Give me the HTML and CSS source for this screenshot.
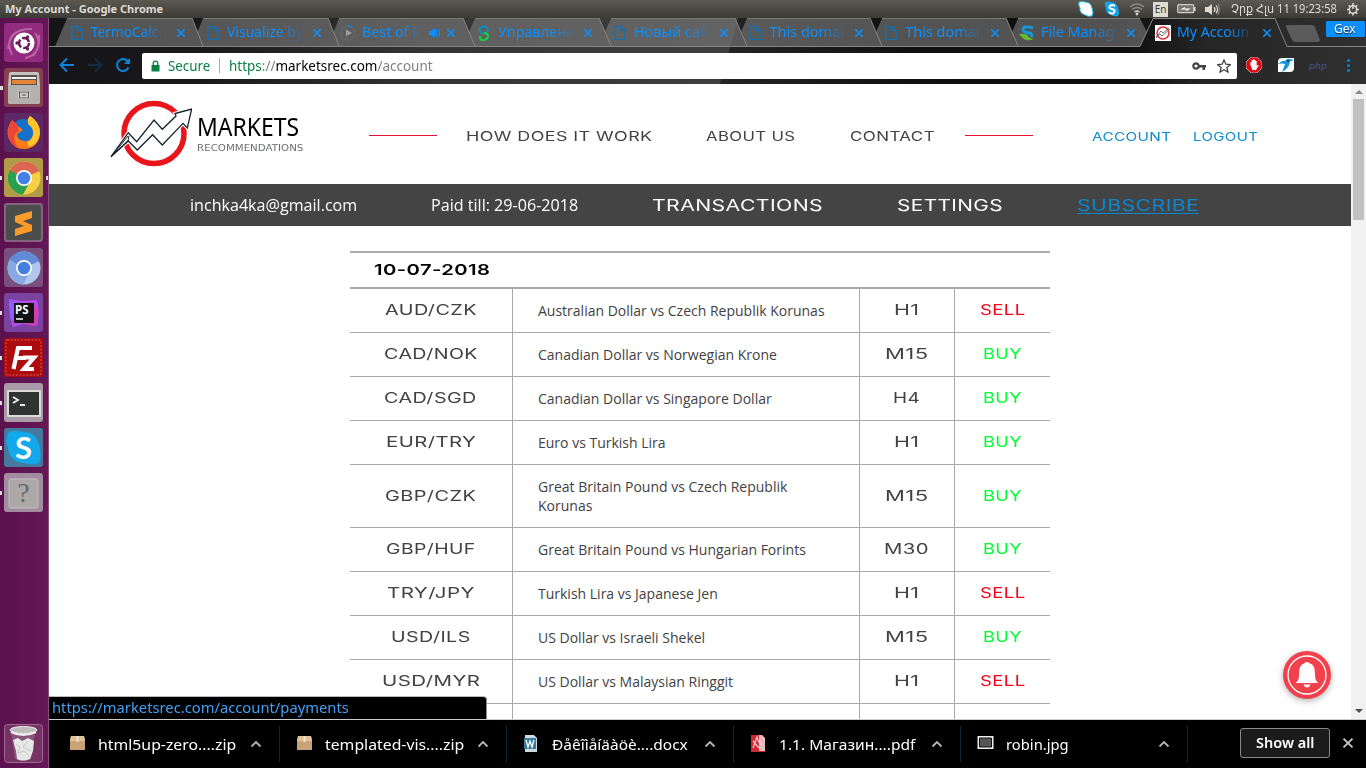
FILE: index.html
```html
<!DOCTYPE html>
<html lang="en">
<head>
<meta charset="utf-8">
<title>My Account</title>
<link rel="stylesheet" href="styles.css">
</head>
<body>
<svg class="defs" width="0" height="0">
  <symbol id="page" viewBox="0 0 12 16"><path d="M1 1.5h6l4 4v9H1z M7 1.5v4h4" fill="none" stroke="#0673c0" stroke-width="1.2"/></symbol>
  <symbol id="x" viewBox="0 0 10 10"><path d="M1.3 1.3l7.4 7.4M8.7 1.3l-7.4 7.4" fill="none" stroke="currentColor" stroke-width="1.6"/></symbol>
  <symbol id="up" viewBox="0 0 12 8"><path d="M1.5 6.5L6 2l4.500 4.500" fill="none" stroke="#b5b5b5" stroke-width="1.8"/></symbol>
  <symbol id="box" viewBox="0 0 17 17"><path d="M2 1h13l1 4v10H1V5z" fill="#c8a377"/><path d="M2 1h13l1 5H1z" fill="#dfc29c"/><path d="M7.500 1h2v6h-2z" fill="#f3e4cc"/></symbol>
</svg>

<header class="panel">
  <span class="panel-title fit" data-w="158">My Account - Google Chrome</span>
  <div class="tray">
    <svg width="16" height="16" viewBox="0 0 16 16"><path d="M1 1q4-1 6 0q6 0 7 6q2 5 0 8q-4 1-7-1Q1 12 2 7Q0 4 1 1z" fill="#fff" stroke="#22b3ee"/></svg>
    <svg width="16" height="16" viewBox="0 0 16 16"><path d="M1 1q4-1 6 0q6 0 7 6q2 5 0 8q-4 1-7-1Q1 12 2 7Q0 4 1 1z" fill="#12a5e8"/><path d="M11 5q-3-2-5 0t2 3t2 3.500t-5-.5" fill="none" stroke="#fff" stroke-width="2"/></svg>
    <svg width="16" height="16" viewBox="0 0 16 16" fill="none" stroke-width="1.300"><path d="M1 6q7-6 14 0M3 8.500q5-4 10 0" stroke="#8e8b82"/><path d="M5.500 11q2.500-2 5 0" stroke="#d8d5cb"/><circle cx="8" cy="13" r=".8" stroke="#d8d5cb"/></svg>
    <span class="lang">En</span>
    <svg width="19" height="16" viewBox="0 0 19 16"><rect x=".7" y="3.700" width="16" height="8" rx="1" fill="#77746b" stroke="#cfcbc2" stroke-width="1.200"/><path d="M17 6h1.500v4H17z" fill="#dfdbd2"/><path d="M3 8.500l5-2.500v1.500h6L9 10V8.500z" fill="#fff"/></svg>
    <svg width="16" height="16" viewBox="0 0 16 16"><path d="M1 6h3l4-3v11l-4-3H1z" fill="#dfdbd2"/><path d="M10 6q2 2.500 0 5M12 4.500q3 4 0 8" fill="none" stroke="#dfdbd2" stroke-width="1.200"/><path d="M14 3q3 5 0 11" fill="none" stroke="#918e85"/></svg>
    <span class="clock fit" data-w="106">Չրք Հլս 11 19:23:58</span>
    <svg width="14" height="16" viewBox="0 0 14 16"><circle cx="7" cy="8.500" r="3.700" fill="none" stroke="#dfdbd2" stroke-width="1.500"/><path d="M7 2v6M1 8.500h2M11 8.500h2M2.700 4.200l1.500 1.500M11.300 4.200L9.800 5.700M2.700 12.800l1.500-1.500M11.300 12.800l-1.500-1.500M7 12.500v2" stroke="#dfdbd2" stroke-width="1.500"/></svg>
  </div>
</header>

<div class="desktop">
<nav class="launcher">
  <svg class="app" viewBox="0 0 39 39"><rect width="39" height="39" rx="3" fill="#922b7e"/><path d="M4 26Q6 5 28 6M35 12q2 20-14 23M8 32Q0 14 15 8M29 33q10-12 2-23" fill="none" stroke="#c88abd" stroke-width="2" opacity=".6"/><circle cx="20" cy="20" r="10.500" fill="#fff"/><circle cx="20" cy="20" r="5" fill="none" stroke="#6b1c5a" stroke-width="2.500" stroke-dasharray="8.500 2"/><circle cx="13" cy="20" r="1.700" fill="#6b1c5a"/><circle cx="23.500" cy="14" r="1.700" fill="#6b1c5a"/><circle cx="23.500" cy="26" r="1.700" fill="#6b1c5a"/></svg>
  <svg class="app run1" viewBox="0 0 39 39"><rect width="39" height="39" rx="3" fill="#87404f"/><path d="M7 4h26q2 0 2 2l1 12v16q0 2-2 2H6q-2 0-2-2V18L5 6q0-2 2-2z" fill="#c5c4c1"/><path d="M7 7h26v10H7z" fill="#5a5248"/><path d="M8 9h24v2H8z" fill="#eee"/><path d="M8 12h24v4H8z" fill="#e58437"/><path d="M4 17h32v17q0 2-2 2H6q-2 0-2-2z" fill="#b3b2b0"/><rect x="15.500" y="24" width="9" height="6" rx="1" fill="none" stroke="#fff" stroke-width="2"/><rect x="15.500" y="24" width="9" height="6" fill="#ccc" stroke="#555"/><path d="M18 27h4" stroke="#555"/></svg>
  <svg class="app" viewBox="0 0 39 39"><rect width="39" height="39" rx="3" fill="#5b2863"/><circle cx="20" cy="20" r="14" fill="#1470c8"/><path d="M8 7Q1 17 5 26q5 11 17 10 13-2 14-16Q36 9 26 3q-4 4-1 9 5 3 4 10-2 7-9 6-7-1-7-7l6-4-4-3-4-3z" fill="#ff7b17"/><path d="M26 3q-4 4-1 9 5 3 4 10-2 6-6 7l2 5q10-3 11-14Q36 9 26 3z" fill="#ffc52c"/><path d="M8 7Q2 16 5 26q4 7 9 9-8-12 1-17l-2-7z" fill="#ee4438"/></svg>
  <svg class="app run active" viewBox="0 0 39 39"><rect width="39" height="39" rx="3" fill="#b29b47"/><circle cx="20" cy="20" r="16.500" fill="#f6cf45"/><path d="M20 20L5 13Q11 3 20 3.500 31 4 35.500 13z" fill="#d96552"/><path d="M5.500 12Q1 22 7 30q5 6 12 6.500L26 24z" fill="#2da04f"/><circle cx="20" cy="20" r="8" fill="#fff"/><circle cx="20" cy="20" r="6.300" fill="#4381e9"/></svg>
  <svg class="app" viewBox="0 0 39 39"><rect width="39" height="39" rx="3" fill="#87627f"/><rect x="2" y="2" width="35" height="35" rx="2" fill="#4b4c4c"/><path d="M11 13l17-5v7l-9 3 9 4v6L11 33v-7l9-3-9-4z" fill="#f99b29"/></svg>
  <svg class="app" viewBox="0 0 39 39"><rect width="39" height="39" rx="3" fill="#78507c"/><circle cx="20" cy="20" r="16.500" fill="#b1c7ed"/><path d="M20 20L5 12Q11 3 20 3.500 31 4 35.500 13z" fill="#618bd6"/><path d="M5.500 12Q1 22 7 30q5 6 12 6.500L26 24z" fill="#86a9e2"/><circle cx="20" cy="20" r="8" fill="#fff"/><circle cx="20" cy="20" r="6.300" fill="#477fe0"/></svg>
  <svg class="app run" viewBox="0 0 39 39"><rect width="39" height="39" rx="3" fill="#7b43a0"/><path d="M5 6l13 2 15-1 2 13-2 13-14-2-10 3-3-10z" fill="#b44bea"/><path d="M5 6l12 4-7 20-4-6z" fill="#945bff"/><path d="M26 8l9 10-3 15-8-1z" fill="#d33cb4"/><rect x="10" y="10" width="20" height="20" fill="#111"/><text x="11" y="21" class="ps">PS</text><path d="M12 26h7" stroke="#fff" stroke-width="1.500"/></svg>
  <svg class="app run" viewBox="0 0 39 39"><rect width="39" height="39" rx="3" fill="#ad0c0e"/><rect x="2" y="2" width="35" height="35" rx="1" fill="none" stroke="#d65a54" stroke-dasharray="2 1.500"/><path d="M9.500 31l4.500-21h14M12 20h10M19 19.500h11L20 31h10" fill="none" stroke="#fff" stroke-width="4.200"/></svg>
  <svg class="app run" viewBox="0 0 39 39"><rect width="39" height="39" rx="3" fill="#a99aa7"/><rect x="3" y="7" width="34" height="27" rx="1" fill="#dddcd9"/><rect x="5" y="9" width="30" height="23" fill="#303331"/><path d="M9 14l5 3-5 3M16 22h5" fill="none" stroke="#eee" stroke-width="1.800"/></svg>
  <svg class="app run" viewBox="0 0 39 39"><rect width="39" height="39" rx="3" fill="#467a9c"/><path d="M4 5q7-4 13-1 15-1 18 13 3 10 0 18-8 3-14 0Q7 35 4 21q-3-9 0-16z" fill="#12a8ec"/><text x="19.500" y="31" class="skype">S</text></svg>
  <svg class="app run" viewBox="0 0 39 39"><rect width="39" height="39" rx="3" fill="#a28ca0"/><rect x="5" y="6" width="29" height="29" rx="2" fill="#aaa9a8" stroke="#c4bec3"/><text x="19.500" y="29" class="ask">?</text></svg>
  <svg class="app trash" viewBox="0 0 39 39"><rect x=".5" y=".5" width="38" height="38" rx="3" fill="#763165" stroke="#9b6a91"/><path d="M7 8l4 27q8 4 16 0l4-27z" fill="#8c6080" opacity=".8"/><path d="M9 16l5-2 4 3 6-3 6 3-1 10-3 8q-7 3-13 0l-1-8z" fill="#e7e7e6"/><path d="M12 20l4 3-2 6 6-2 5 5M24 17l-5 6 8 4" fill="none" stroke="#c9c5c9"/><ellipse cx="19.500" cy="6" rx="13.500" ry="3.500" fill="#bcbcb9" stroke="#eee"/><path d="M7 8q12 6 25 0" fill="none" stroke="#eee" stroke-width="2"/></svg>
</nav>

<main class="browser">
  <div class="chrome">
    <svg class="theme" viewBox="49 18 1317 66" width="1317" height="66">
      <defs>
        <linearGradient id="glow"><stop offset="0" stop-color="#151517"/><stop offset=".12" stop-color="#1a1a1c"/><stop offset=".28" stop-color="#333"/><stop offset=".5" stop-color="#3e3e3e"/></linearGradient>
        <linearGradient id="dark"><stop offset="0" stop-color="#242424"/><stop offset=".3" stop-color="#101011"/><stop offset=".62" stop-color="#0d0d0e"/><stop offset=".75" stop-color="#252526"/><stop offset="1" stop-color="#303031"/></linearGradient>
      </defs>
      <path d="M49 18h1317v66H49z" fill="url(#glow)"/>
      <path d="M738 18h628v66H720z" fill="url(#dark)"/>
      <path d="M55 46.500L67 18.500H192L197.500 32 203 18.500H328L333.500 32 339 18.500H463L469 32 475 18.500H599L605 32 611 18.500H735L741 32 747 18.500H870L876 32 882 18.500H1006L1012 32 1018 18.500H1140L1147 32 1140 46.500z" fill="#777" fill-opacity=".66"/>
      <path d="M49 46.500h1091l13-28h122l12 28h79M192 18l11 28M328 18l11 28M463 18l12 28M599 18l12 28M735 18l12 28M870 18l12 28M1006 18l12 28" fill="none" stroke="#868686"/>
      <path d="M67 18.500h125M203 18.500h125M339 18.500h124M475 18.500h124M611 18.500h124M747 18.500h123M882 18.500h124M1018 18.500h122" stroke="#777"/>
      <path d="M1287 25h25q2 0 3 2l5 13q0 2-2 2h-23q-2 0-3-2l-6-13q0-2 1-2z" fill="#5b5b5b"/>
    </svg>
    <div class="tabs">
      <div class="tab"><svg class="fav"><use href="#page"/></svg><span class="tabname"><span class="fit" data-w="78">TermoCalc |</span></span><svg class="close"><use href="#x"/></svg></div>
      <div class="tab"><svg class="fav"><use href="#page"/></svg><span class="tabname"><span class="fit" data-w="76">Visualize by</span></span><svg class="close"><use href="#x"/></svg></div>
      <div class="tab"><svg class="fav wide" viewBox="0 0 16 16"><circle cx="8" cy="8" r="7" fill="none" stroke="#666" stroke-width="1.500"/><path d="M8 1q3 0 4 2" fill="none" stroke="#0a8de0" stroke-width="1.500"/><path d="M6 4.500l6 3.500-6 3.500z" fill="#999"/></svg><span class="tabname short"><span class="fit" data-w="59">Best of R</span></span><svg class="sound" viewBox="0 0 11 12"><path d="M0 4h2l4-3v10L2 8H0z" fill="#0b8fff"/><path d="M7.500 2v8M10 2q1 4 0 8" stroke="#0b8fff" fill="none"/></svg><svg class="close"><use href="#x"/></svg></div>
      <div class="tab"><svg class="fav" viewBox="0 0 12 16"><path d="M10 5Q9 1 5 1.500T2 6q1 3 4 2.500T10 5" fill="none" stroke="#168bb5" stroke-width="2"/><path d="M6 8q4 0 4 3t-4 4-4-4" fill="none" stroke="#12d53c" stroke-width="2"/></svg><span class="tabname"><span class="fit" data-w="77">Управлени</span></span><svg class="close"><use href="#x"/></svg></div>
      <div class="tab"><svg class="fav"><use href="#page"/></svg><span class="tabname"><span class="fit" data-w="76">Новый сай</span></span><svg class="close"><use href="#x"/></svg></div>
      <div class="tab"><svg class="fav"><use href="#page"/></svg><span class="tabname"><span class="fit" data-w="75">This domai</span></span><svg class="close"><use href="#x"/></svg></div>
      <div class="tab"><svg class="fav"><use href="#page"/></svg><span class="tabname"><span class="fit" data-w="75">This domai</span></span><svg class="close"><use href="#x"/></svg></div>
      <div class="tab"><svg class="fav wide" viewBox="0 0 16 16"><path d="M14 3Q4 0 4 5q1 3 7 3 3 1 1 4" fill="none" stroke="#1599d6" stroke-width="3"/><path d="M0 9q7-1 9 2t6 3q-5 2-8 1T0 9z" fill="#69b82e"/></svg><span class="tabname"><span class="fit" data-w="73">File Manag</span></span><svg class="close"><use href="#x"/></svg></div>
      <div class="tab"><svg class="fav wide" viewBox="0 0 16 16"><path d="M0 0h16v16H0z" fill="#fff"/><circle cx="8" cy="8" r="6" fill="none" stroke="#df2a32" stroke-width="1.500"/><path d="M1 13l4-4 2 2 8-7M1 12l5-6 2 2 6-5" fill="none" stroke="#555" stroke-width=".8"/></svg><span class="tabname"><span class="fit" data-w="72">My Accoun</span></span><svg class="close"><use href="#x"/></svg></div>
      <span class="profile"><span class="fit" data-w="22">Gex</span></span>
    </div>
    <div class="toolbar">
      <svg width="16" height="16" viewBox="0 0 16 16"><path d="M15 8H2M8 1.500L1.500 8 8 14.500" fill="none" stroke="#0a84d8" stroke-width="2"/></svg>
      <svg width="16" height="16" viewBox="0 0 16 16"><path d="M1 8h13M8 1.500L14.500 8 8 14.500" fill="none" stroke="#122d42" stroke-width="2"/></svg>
      <svg width="16" height="16" viewBox="0 0 16 16"><path d="M13.500 10.500A6 6 0 1 1 12.500 4" fill="none" stroke="#0a84d8" stroke-width="2"/><path d="M15 1v6H9z" fill="#0a84d8"/></svg>
      <div class="omnibox">
        <svg class="lock" width="9" height="12" viewBox="0 0 9 12"><path d="M.5 5h8v6.500h-8z" fill="#0b8043"/><path d="M2.200 5V3.500a2.300 2.300 0 0 1 4.600 0V5" fill="none" stroke="#0b8043" stroke-width="1.300"/></svg>
        <span class="secure fit" data-w="42">Secure</span>
        <i class="bar"></i>
        <span class="fit" data-w="204"><span class="green">https</span><span class="grey">://</span>marketsrec.com<span class="grey">/account</span></span>
        <svg class="key" width="14" height="10" viewBox="0 0 14 10"><circle cx="4" cy="5" r="2.700" fill="none" stroke="#444" stroke-width="2.200"/><path d="M7 4h7v2.500h-1V9h-2.500V6.500H7z" fill="#444"/></svg>
        <svg width="14" height="14" viewBox="0 0 14 14"><path d="M7 1l1.800 4.200 4.600.4-3.500 3 1.100 4.500L7 10.700l-4 2.400 1.100-4.500-3.500-3 4.600-.4z" fill="none" stroke="#444" stroke-width="1.300"/></svg>
      </div>
      <svg class="ext" width="16" height="16" viewBox="0 0 16 16"><path d="M5 0h6l5 5v6l-5 5H5l-5-5V5z" fill="#e10b17" stroke="#bbb" stroke-width=".8"/><path d="M4.500 8V5h1.200V3h1.300v-.7h1.300V3h1.200v1h1.200v5l1-1 1 .6L10 13H6.500z" fill="#fff"/></svg>
      <svg class="ext" width="16" height="16" viewBox="0 0 16 16"><path d="M4 1h12v10q0 4-4 4H0V5q0-4 4-4z" fill="#fff"/><path d="M0 7q4-4 7-3 2-3 5-2l4 1-4 1.500q0 6-8 10.500 2-5 3-8-3-1-7 0z" fill="#1697d9"/><circle cx="10" cy="4" r="1" fill="#124"/></svg>
      <span class="php">php</span>
      <i class="dots"></i>
    </div>
  </div>

  <div class="viewport">
    <div class="page">
      <div class="head">
        <div class="logo">
          <svg width="82" height="68" viewBox="110 99 82 68"><circle cx="154" cy="133.500" r="30" fill="none" stroke="#e9151b" stroke-width="5.500"/><path d="M111 156.700l17.300-24 8.400 9L154 120l8.300 9.300L176 116l-1-2.500 16.700-4.500-4.400 19-4.300-4.600-20.700 21.600-9.700-10.300-15.300 15.300-9-9z" fill="#fff" stroke="#fff" stroke-width="3.500"/><path d="M111 156.700l17.300-24 8.400 9L154 120l8.300 9.300L176 116l-1-2.500 16.700-4.500-4.400 19-4.300-4.600-20.700 21.600-9.700-10.300-15.300 15.300-9-9z" fill="#fff" stroke="#15222e" stroke-width="1.300"/><path d="M111 156.700l17-16 1-5M112 156l16-20" fill="none" stroke="#15222e"/></svg>
          <div class="brand"><span class="fit markets" data-w="102">MARKETS</span><span class="fit recs" data-w="106">RECOMMENDATIONS</span></div>
        </div>
        <div class="menu">
          <i class="rule"></i>
          <span class="fit eu m1" data-w="186">HOW DOES IT WORK</span>
          <span class="fit eu m2" data-w="90">ABOUT US</span>
          <span class="fit eu m3" data-w="85">CONTACT</span>
          <i class="rule"></i>
        </div>
        <div class="user"><span class="fit eu" data-w="79">ACCOUNT</span><span class="fit eu" data-w="65">LOGOUT</span></div>
      </div>
      <div class="subbar">
        <span class="fit" data-w="167">inchka4ka@gmail.com</span>
        <span class="fit" data-w="147">Paid till: 29-06-2018</span>
        <span class="fit eu" data-w="171">TRANSACTIONS</span>
        <span class="fit eu" data-w="106">SETTINGS</span>
        <span class="fit eu subscribe" data-w="122">SUBSCRIBE</span>
      </div>
      <div class="signals">
        <div class="date"><span class="fit eu" data-w="116">10-07-2018</span></div>
        <div class="row"><div><span class="fit eu" data-w="92">AUD/CZK</span></div><p>Australian Dollar vs Czech Republik Korunas</p><div><span class="fit eu" data-w="26">H1</span></div><div class="sell"><span class="fit eu" data-w="45">SELL</span></div></div>
        <div class="row"><div><span class="fit eu" data-w="94">CAD/NOK</span></div><p>Canadian Dollar vs Norwegian Krone</p><div><span class="fit eu" data-w="44">M15</span></div><div class="buy"><span class="fit eu" data-w="39">BUY</span></div></div>
        <div class="row"><div><span class="fit eu" data-w="93">CAD/SGD</span></div><p>Canadian Dollar vs Singapore Dollar</p><div><span class="fit eu" data-w="27">H4</span></div><div class="buy"><span class="fit eu" data-w="39">BUY</span></div></div>
        <div class="row"><div><span class="fit eu" data-w="90">EUR/TRY</span></div><p>Euro vs Turkish Lira</p><div><span class="fit eu" data-w="26">H1</span></div><div class="buy"><span class="fit eu" data-w="39">BUY</span></div></div>
        <div class="row tall"><div><span class="fit eu" data-w="91">GBP/CZK</span></div><p>Great Britain Pound vs Czech Republik Korunas</p><div><span class="fit eu" data-w="44">M15</span></div><div class="buy"><span class="fit eu" data-w="39">BUY</span></div></div>
        <div class="row"><div><span class="fit eu" data-w="90">GBP/HUF</span></div><p>Great Britain Pound vs Hungarian Forints</p><div><span class="fit eu" data-w="45">M30</span></div><div class="buy"><span class="fit eu" data-w="39">BUY</span></div></div>
        <div class="row"><div><span class="fit eu" data-w="88">TRY/JPY</span></div><p>Turkish Lira vs Japanese Jen</p><div><span class="fit eu" data-w="26">H1</span></div><div class="sell"><span class="fit eu" data-w="45">SELL</span></div></div>
        <div class="row"><div><span class="fit eu" data-w="80">USD/ILS</span></div><p>US Dollar vs Israeli Shekel</p><div><span class="fit eu" data-w="44">M15</span></div><div class="buy"><span class="fit eu" data-w="39">BUY</span></div></div>
        <div class="row"><div><span class="fit eu" data-w="98">USD/MYR</span></div><p>US Dollar vs Malaysian Ringgit</p><div><span class="fit eu" data-w="26">H1</span></div><div class="sell"><span class="fit eu" data-w="45">SELL</span></div></div>
        <div class="row"><div></div><p></p><div></div><div></div></div>
      </div>
      <svg class="bell" width="60" height="60" viewBox="-30 -30 60 60"><circle r="24" fill="#f0414d"/><circle r="19" fill="none" stroke="#fff" stroke-width="1.300"/><path d="M-11.500 8q3.500-2 3.500-8 0-11 5-11.500Q-2-13 0-13t3 1.500Q8-11 8 0q0 6 3.500 8z" fill="#fff"/><path d="M-3.500 9.500h7q-1 3-3.500 3t-3.500-3z" fill="#fff"/></svg>
    </div>
    <div class="scroll"><i class="arrow-up"></i><i class="thumb"></i><i class="arrow-down"></i></div>
    <div class="status"><span class="fit" data-w="297">https://marketsrec.com/account/payments</span></div>
  </div>

  <footer class="shelf">
    <div class="dl"><svg class="ficon"><use href="#box"/></svg><span class="fit" data-w="138">html5up-zero....zip</span><svg class="chev"><use href="#up"/></svg></div>
    <div class="dl"><svg class="ficon"><use href="#box"/></svg><span class="fit" data-w="139">templated-vis....zip</span><svg class="chev"><use href="#up"/></svg></div>
    <div class="dl"><svg class="ficon" viewBox="0 0 17 17"><path d="M2 0h9l3 3v14H2z" fill="#ccdbe2"/><path d="M1 3h12v11H1z" fill="#397b9c"/><path d="M3 5l2 7 2-6 2 6 2-7" fill="none" stroke="#fff" stroke-width="1.300"/></svg><span class="fit" data-w="136">Ðåêîìåíäàöè....docx</span><svg class="chev"><use href="#up"/></svg></div>
    <div class="dl"><svg class="ficon" viewBox="0 0 17 17"><path d="M1 0h11l3 3v14H1z" fill="#cf2831"/><path d="M3 13l4-11q2 8 5 7M3 6l6 7" fill="none" stroke="#f5caca" stroke-width="1.200"/><path d="M9 0h3l3 3v13H9z" fill="#eee" opacity=".75"/></svg><span class="fit" data-w="137">1.1. Магазин....pdf</span><svg class="chev"><use href="#up"/></svg></div>
    <div class="dl"><svg class="ficon" viewBox="0 0 17 17"><path d="M.5 1h16v13H.5z" fill="#eee"/><path d="M2.500 3h12v9h-12z" fill="#555" stroke="#111"/></svg><span class="fit" data-w="63">robin.jpg</span><svg class="chev"><use href="#up"/></svg></div>
    <div class="showall"><span class="fit" data-w="58">Show all</span></div>
    <svg class="shelfx"><use href="#x"/></svg>
  </footer>
</main>
</div>
<script src="fit.js"></script>
</body>
</html>
```
FILE: styles.css
```css
* { box-sizing: border-box; }
body { margin: 0; width: 1366px; height: 768px; overflow: hidden; background: #fff; font-family: "Noto Sans", "DejaVu Sans", sans-serif; }
svg { display: block; flex: none; }
.defs { position: absolute; }
.fit { display: block; flex: none; white-space: nowrap; }
.fit-in { display: inline-block; transform-origin: 0 50%; white-space: pre; }

.panel { display: flex; justify-content: space-between; align-items: center; height: 18px; padding: 0 6px 0 5px; background: linear-gradient(#5b594f, #3c3b37); color: #dfdbd2; }
.panel-title { font-size: 11px; font-weight: 700; line-height: 18px; }
.tray { display: flex; align-items: center; gap: 8px; }
.tray svg:first-child { margin-right: 2px; margin-left: -1px; }
.tray svg:nth-child(2) { margin-right: 1px; }
.lang { width: 15px; height: 15px; margin: 0 1px 0 0; background: #dfdbd2; color: #3c3b37; font-size: 10px; line-height: 15px; text-align: center; }
.clock { font: 12px/18px "Noto Sans", "DejaVu Sans", sans-serif; margin: 0 1px 0 3px; }

.desktop { display: flex; height: 750px; }
.launcher { width: 49px; background: linear-gradient(90deg, #5b114d, #651756); border-right: 1px solid #84517b; padding: 5px 0 5px 4px; display: flex; flex-direction: column; gap: 6px; }
.app { width: 39px; height: 39px; overflow: visible; }
.trash { margin-top: auto; }
.run, .run1 { margin-left: -4px; width: 43px; padding-left: 4px; background: linear-gradient(#ddd, #ddd) 0 50% / 2px 4px no-repeat; }
.run1 { background-size: 3px 4px; }
.active { width: 48px; padding-right: 5px; background: linear-gradient(#ddd, #ddd) 0 50% / 2px 4px no-repeat, linear-gradient(#ddd, #ddd) 100% 50% / 2px 4px no-repeat; }
.ps { font: 700 11.500px "Noto Sans", sans-serif; fill: #fff; }
.skype { font: 700 31px Lato, sans-serif; fill: #fff; text-anchor: middle; }
.ask { font: 27px "Liberation Serif", serif; fill: #686868; text-anchor: middle; }

.browser { width: 1317px; display: flex; flex-direction: column; }
.chrome { position: relative; height: 66px; }
.theme { position: absolute; left: 0; top: 0; }
.tabs { position: relative; display: flex; height: 29px; padding-left: 22px; color: #0b8fff; }
.tab { width: 135.700px; display: flex; align-items: center; }
.fav { width: 12px; height: 16px; }
.fav.wide { width: 16px; margin: 0 -2px; }
.tabname { width: 78px; margin-left: 8px; overflow: hidden; font-size: 14.500px; line-height: 27px; padding-bottom: 2px; -webkit-mask-image: linear-gradient(90deg, #000 65%, transparent); mask-image: linear-gradient(90deg, #000 65%, transparent); }
.tabname.short { width: 60px; margin-right: 7px; }
.sound { width: 11px; height: 12px; margin-right: -1px; }
.close { width: 10px; height: 10px; margin-left: 7px; }
.profile { position: absolute; left: 1277px; top: 3px; width: 39px; height: 16px; background: #0a8ffc; color: #fff; font-size: 12.500px; line-height: 15px; padding-left: 8px; border-radius: 1px; text-shadow: 0 1px 1px #222; }
.toolbar { position: relative; display: flex; align-items: center; height: 37px; padding: 0 0 1px 10px; gap: 12px; }
.omnibox { width: 1095px; height: 26px; margin: 1px -3px 0 -1px; padding: 0 6px 0 9px; border-radius: 2px; background: #fff; display: flex; align-items: center; font-size: 14px; line-height: 24px; }
.lock { margin-right: 8px; }
.secure, .green { color: #0b8043; }
.grey { color: #808080; }
.bar { width: 1px; height: 15px; background: #aaa; margin: 0 9px; }
.key { margin: 0 11px 0 auto; }
.ext { margin-right: 4px; }
.php { color: #47538d; font: italic 9.500px "DejaVu Sans", sans-serif; width: 17px; margin-left: -1px; }
.dots { width: 3px; height: 3px; border-radius: 50%; background: #0a84d8; box-shadow: 0 -5px #0a84d8, 0 5px #0a84d8; margin-left: 9px; }

.viewport { position: relative; display: flex; height: 635px; overflow: hidden; background: #fff; }
.page { width: 1302px; }
.head { display: flex; align-items: center; height: 100px; padding-left: 61px; }
.logo { display: flex; width: 259px; }
.logo svg { margin-top: -2px; }
.brand { padding: 12px 0 0 5px; }
.markets { font: 24.500px/28px "Noto Sans", sans-serif; color: #000; }
.recs { font: 9.500px/10px "DejaVu Sans", sans-serif; color: #6c6e72; margin-top: 2px; }
.eu { font-family: Inter, "Liberation Sans", sans-serif; letter-spacing: .3px; }
.menu { display: flex; align-items: center; color: #424242; font-size: 13px; line-height: 20px; margin-top: 4px; }
.rule { width: 68px; height: 1px; background: #e2142d; margin-top: -1px; }
.m1 { margin-left: 29px; }
.m2 { margin-left: 54px; }
.m3 { margin-left: 54px; margin-right: 30px; }
.user { display: flex; gap: 22px; margin: 5px 0 0 59px; color: #0c8bd0; font-size: 12px; line-height: 20px; }
.subbar { display: flex; align-items: center; gap: 74px; height: 42px; padding-left: 141px; background: #444; color: #fff; font: 16px/42px "Open Sans", sans-serif; }
.subbar .eu { font-size: 15.500px; line-height: 41px; margin-top: 1px; }
.subbar .subscribe { color: #0788d1; line-height: 20px; box-shadow: inset 0 -2px #444, inset 0 -3px #0788d1; }
.signals { width: 700px; margin: 25px auto 0; border-top: 2px solid #a9a9a9; color: #424242; }
.date { height: 36px; border-bottom: 2px solid #a9a9a9; padding-left: 24px; color: #000; font-weight: 600; font-size: 15px; line-height: 34px; }
.row { display: grid; grid-template-columns: 163px 347px 95px 95px; height: 44px; border-bottom: 1px solid #a9a9a9; }
.row.tall { height: 63px; }
.row > * { display: flex; align-items: center; justify-content: center; border-right: 1px solid #a9a9a9; font-size: 14px; line-height: 19px; }
.row > div { padding: 0 1px 3px 0; }
.row.tall > div { padding-bottom: 1px; }
.row > :last-child { border-right: 0; }
.row p { justify-content: flex-start; margin: 0; padding: 0 30px 1px 25px; font-family: "Open Sans", sans-serif; }
.sell { color: #fb0019; }
.buy { color: #00ff32; }
.bell { position: absolute; left: 1228px; top: 561px; filter: drop-shadow(0 2px 3px rgba(0,0,0,.3)); }
.scroll { width: 15px; background: #f1f1f1; display: flex; flex-direction: column; align-items: center; }
.arrow-up { border: 4px solid transparent; border-top: 0; border-bottom-color: #8a8a8a; margin: 6px 0 5px; }
.thumb { width: 11px; height: 121px; background: #c1c1c1; }
.arrow-down { border: 4px solid transparent; border-bottom: 0; border-top-color: #505050; margin: auto 0 6px; }
.status { position: absolute; left: 0; bottom: 0; width: 438px; height: 23px; padding-left: 3px; border-top: 1px solid #bbb; border-right: 1px solid #888; border-top-right-radius: 4px; background: #000; color: #42a0f3; font-size: 14px; line-height: 21px; }

.shelf { height: 49px; background: #000; border-top: 1px solid #ccc; display: flex; align-items: center; color: #fff; font-size: 15px; line-height: 30px; padding-left: 4px; }
.dl { width: 227px; height: 36px; display: flex; align-items: center; border-right: 1px solid #0c2735; padding: 0 17px 0 16px; }
.ficon { width: 17px; height: 17px; margin: -1px 12px 0 0; }
.chev { width: 12px; height: 8px; margin-left: auto; }
.showall { width: 90px; height: 30px; margin: -2px 0 0 52px; border: 1px solid #888; border-radius: 3px; background: #1b1b1b; padding-left: 15px; font-size: 14px; font-weight: 600; line-height: 27px; }
.shelfx { width: 12px; height: 12px; margin: -2px 0 0 12px; color: #c5c5c5; }
```
FILE: fit.js
```js
// Sets each label to its design width by scaling the glyphs horizontally.
document.querySelectorAll('.fit').forEach(function (el) {
  var inner = document.createElement('span');
  inner.className = 'fit-in';
  while (el.firstChild) inner.appendChild(el.firstChild);
  el.appendChild(inner);
  var target = Number(el.dataset.w);
  var natural = inner.offsetWidth;
  el.style.width = target + 'px';
  inner.style.transform = 'scaleX(' + target / natural + ')';
});
```
